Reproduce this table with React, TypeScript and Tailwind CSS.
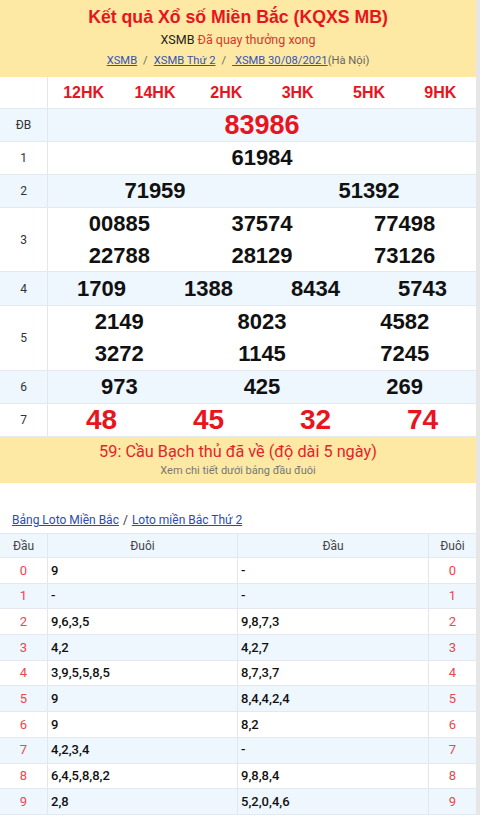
import React from 'react';

const RED = 'text-[#e8141e]';

type Row = {
  label: string;
  cols: number;
  values: string[];
  h: string;
  blue?: boolean;
  kind?: 'db' | 'g7';
};

const ROWS: Row[] = [
  { label: 'ĐB', cols: 1, values: ['83986'], h: 'h-[33px]', blue: true, kind: 'db' },
  { label: '1', cols: 1, values: ['61984'], h: 'h-[33px]' },
  { label: '2', cols: 2, values: ['71959', '51392'], h: 'h-[33px]', blue: true },
  { label: '3', cols: 3, values: ['00885', '37574', '77498', '22788', '28129', '73126'], h: 'h-[64px]' },
  { label: '4', cols: 4, values: ['1709', '1388', '8434', '5743'], h: 'h-[34px]', blue: true },
  { label: '5', cols: 3, values: ['2149', '8023', '4582', '3272', '1145', '7245'], h: 'h-[65px]' },
  { label: '6', cols: 3, values: ['973', '425', '269'], h: 'h-[33px]', blue: true },
  { label: '7', cols: 4, values: ['48', '45', '32', '74'], h: 'h-[33px]', kind: 'g7' },
];

const GRID: Record<number, string> = {
  1: 'grid-cols-1',
  2: 'grid-cols-2',
  3: 'grid-cols-3',
  4: 'grid-cols-4',
  6: 'grid-cols-6',
};

const LOTO = [
  { d: '0', a: '9', b: '-' },
  { d: '1', a: '-', b: '-' },
  { d: '2', a: '9,6,3,5', b: '9,8,7,3' },
  { d: '3', a: '4,2', b: '4,2,7' },
  { d: '4', a: '3,9,5,5,8,5', b: '8,7,3,7' },
  { d: '5', a: '9', b: '8,4,4,2,4' },
  { d: '6', a: '9', b: '8,2' },
  { d: '7', a: '4,2,3,4', b: '-' },
  { d: '8', a: '6,4,5,8,8,2', b: '9,8,8,4' },
  { d: '9', a: '2,8', b: '5,2,0,4,6' },
];

function ResultRow({ row }: { row: Row }) {
  const numClass =
    row.kind === 'db'
      ? `text-[27px] ${RED}`
      : row.kind === 'g7'
        ? `text-[28px] ${RED}`
        : 'text-[22px] text-[#111]';
  return (
    <div
      className={`flex box-border border-b border-[#e3e9ef] ${row.h} ${row.blue ? 'bg-[#eef6fe]' : 'bg-white'}`}
    >
      <div className="flex w-[48px] shrink-0 items-center justify-center border-r border-[#e3e6ea] text-[12px] text-[#333]">
        {row.label}
      </div>
      <div className={`grid flex-1 items-center ${GRID[row.cols]}`}>
        {row.values.map((v, i) => (
          <div
            key={i}
            className={`text-center font-bold leading-[32px] font-['Liberation_Sans',Arial,sans-serif] ${numClass}`}
          >
            {v}
          </div>
        ))}
      </div>
    </div>
  );
}

export default function App() {
  return (
    <div className="flex w-[480px] min-h-[815px] bg-[#e6e6e6] font-['Roboto',sans-serif]">
      <div className="w-[476px] shrink-0 bg-white">
        {/* header */}
        <div className="flex h-[77px] flex-col items-center bg-[#fde9a4] pt-[6px]">
          <h1
            className={`text-[17.7px] font-bold leading-[23px] font-['Liberation_Sans',Arial,sans-serif] ${RED}`}
          >
            Kết quả Xổ số Miền Bắc (KQXS MB)
          </h1>
          <p className="mt-[3px] text-[12.5px] leading-[16px] text-[#222]">
            XSMB <span className="text-[#d9362b]">Đã quay thưởng xong</span>
          </p>
          <p className="mt-[5px] text-[11.2px] leading-[16px] text-[#666]">
            <span className="text-[#3553b5] underline">XSMB</span>
            <span className="mx-[6px]">/</span>
            <span className="text-[#3553b5] underline">XSMB Thứ 2</span>
            <span className="mx-[6px]">/</span>
            <span className="text-[#3553b5] underline"> XSMB 30/08/2021</span>
            (Hà Nội)
          </p>
        </div>

        {/* results */}
        <div className="flex h-[32px] box-border border-b border-[#e3e9ef] bg-white">
          <div className="w-[48px] shrink-0 border-r border-[#e3e6ea]" />
          <div className={`grid flex-1 items-center ${GRID[6]}`}>
            {['12HK', '14HK', '2HK', '3HK', '5HK', '9HK'].map((c) => (
              <div
                key={c}
                className={`text-center text-[16px] font-bold font-['Liberation_Sans',Arial,sans-serif] ${RED}`}
              >
                {c}
              </div>
            ))}
          </div>
        </div>
        {ROWS.map((r) => (
          <ResultRow key={r.label} row={r} />
        ))}

        {/* banner */}
        <div className="flex h-[46px] flex-col items-center bg-[#fde9a4] pt-[4px]">
          <p className="text-[16.3px] leading-[21px] text-[#e5232b]">
            59: Cầu Bạch thủ đã về (độ dài 5 ngày)
          </p>
          <p className="mt-[2px] text-[11px] leading-[14px] text-[#777]">
            Xem chi tiết dưới bảng đầu đuôi
          </p>
        </div>

        {/* loto */}
        <div className="flex h-[50px] items-end pb-[5px] pl-[12px] text-[12px] leading-[16px] text-[#333]">
          <span className="text-[#2a4cb0] underline">Bảng Loto Miền Bắc</span>
          <span className="mx-[4px]">/</span>
          <span className="text-[#2a4cb0] underline">Loto miền Bắc Thứ 2</span>
        </div>
        <div className="border-t border-[#e3e9ef]">
          <div className="flex h-[24px] box-border border-b border-[#e3e9ef] bg-[#eef6fe] text-[12px] text-[#444]">
            <div className="flex w-[48px] items-center justify-center border-r border-[#e3e6ea]">Đầu</div>
            <div className="flex w-[190px] items-center justify-center border-r border-[#e3e6ea]">Đuôi</div>
            <div className="flex w-[191px] items-center justify-center border-r border-[#e3e6ea]">Đầu</div>
            <div className="flex flex-1 items-center justify-center">Đuôi</div>
          </div>
          {LOTO.map((r, i) => (
            <div
              key={r.d}
              className={`flex h-[25.7px] box-border border-b border-[#e3e9ef] text-[13px] ${i % 2 ? 'bg-[#eef6fe]' : 'bg-white'}`}
            >
              <div className="flex w-[48px] items-center justify-center border-r border-[#e3e6ea] text-[#f0444f]">
                {r.d}
              </div>
              <div className="flex w-[190px] items-center border-r border-[#e3e6ea] pl-[3px] font-medium text-[#111]">
                {r.a}
              </div>
              <div className="flex w-[191px] items-center border-r border-[#e3e6ea] pl-[3px] font-medium text-[#111]">
                {r.b}
              </div>
              <div className="flex flex-1 items-center justify-center text-[#f0444f]">{r.d}</div>
            </div>
          ))}
        </div>
      </div>
    </div>
  );
}
